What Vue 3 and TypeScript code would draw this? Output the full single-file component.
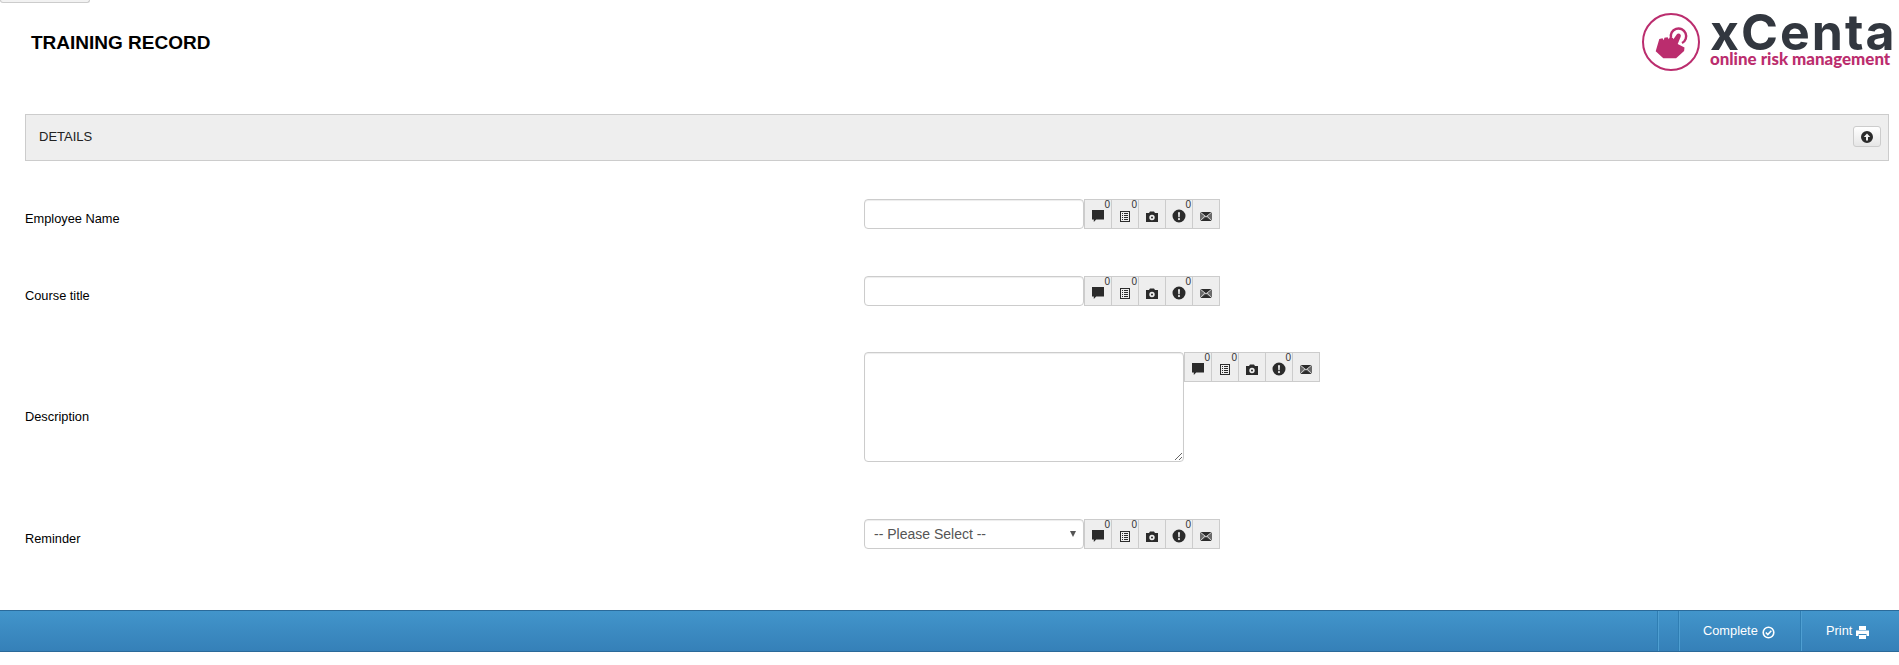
<script setup lang="ts">
type Tool = { name: string; count: boolean }
type Row = { label: string; kind: 'input' | 'area' | 'select' }
const tools: Tool[] = [
  { name: 'comment', count: true },
  { name: 'list', count: true },
  { name: 'camera', count: false },
  { name: 'alert', count: true },
  { name: 'mail', count: false },
]
const rows: Row[] = [
  { label: 'Employee Name', kind: 'input' },
  { label: 'Course title', kind: 'input' },
  { label: 'Description', kind: 'area' },
  { label: 'Reminder', kind: 'select' },
]
</script>

<template>
  <div class="page">
    <div class="stub"></div>
    <header class="head">
      <h1 class="title">TRAINING RECORD</h1>
      <div class="logo">
        <svg class="mark" width="60" height="60" viewBox="0 0 60 60">
          <circle cx="30" cy="30" r="28" fill="none" stroke="#bb2d6e" stroke-width="2" />
          <path d="M14.700 39.300L18.300 27l3.200-.8 1.300 2 .6-2.400 3.200-.6 1.200 2 .8-1.700 3.400.4.400 1.400 3.300-4.800a2.300 2.300 0 0 1 4 2.200l-3 7.300 6.800 3.500-.4 3.600-8 7.200H22.300z" fill="#bb2d6e" />
          <path d="M30 26A7.700 7.700 0 1 1 41 31" fill="none" stroke="#bb2d6e" stroke-width="2.400" />
        </svg>
        <div class="brand">
          <div class="word">xCenta</div>
          <div class="tag">online risk management</div>
        </div>
      </div>
    </header>

    <section class="panel">
      <span class="panel-title">DETAILS</span>
      <button class="collapse" type="button" aria-label="Collapse">
        <svg width="12" height="12" viewBox="0 0 12 12">
          <path fill-rule="evenodd" d="M6 0a6 6 0 1 1 0 12A6 6 0 0 1 6 0zM6 2.500L2.800 6H5v3.500h2V6h2.200z" fill="#2b2b2b" />
        </svg>
      </button>
    </section>

    <form class="form" @submit.prevent>
      <div v-for="r in rows" :key="r.label" class="row" :class="'row-' + r.kind">
        <label class="lbl">{{ r.label }}</label>
        <div class="ctl">
          <input v-if="r.kind === 'input'" class="field" type="text" />
          <textarea v-else-if="r.kind === 'area'" class="field area"></textarea>
          <div v-else class="select-wrap">
            <select class="field sel">
              <option>-- Please Select --</option>
            </select>
          </div>
          <div class="tools">
            <span v-for="t in tools" :key="t.name" class="tool">
              <i v-if="t.count" class="num">0</i>
              <svg width="14" height="14" viewBox="0 0 14 14">
                <path v-if="t.name === 'comment'" d="M1 1h12v9.500H5.200L2.800 13v-2.500H1z" />
                <path v-else-if="t.name === 'list'" fill-rule="evenodd" d="M2 2h10v11H2zM3 3v9h8V3zM4 4h1v1H4zM6 4h4v1H6zM4 6h1v1H4zM6 6h4v1H6zM4 8h1v1H4zM6 8h4v1H6zM4 10h1v1H4zM6 10h4v1H6z" />
                <path v-else-if="t.name === 'camera'" fill-rule="evenodd" d="M1 4h3l1-1.500h4L10 4h3v9H1zM7 5.800a2.700 2.700 0 1 0 0 5.400 2.700 2.700 0 0 0 0-5.400zM7 7.500a1 1 0 1 1 0 2 1 1 0 0 1 0-2z" />
                <path v-else-if="t.name === 'alert'" fill-rule="evenodd" d="M7 .5a6.500 6.500 0 1 1 0 13A6.500 6.500 0 0 1 7 .5zM6 3.200l.3 5h1.400l.3-5zM7 9a1.100 1.100 0 1 0 0 2.200A1.100 1.100 0 0 0 7 9z" />
                <template v-else>
                  <path fill="#6a6a6a" d="M1 3h12v9H1z" />
                  <path d="M1.500 3h11L7 7.300zM1.500 12L7 8.300l5.500 3.700z" />
                  <path fill="none" stroke="#e4e4e4" stroke-width=".8" d="M1 3l6 4.800L13 3M1 12l4.800-5M13 12L8.200 7" />
                </template>
              </svg>
            </span>
          </div>
        </div>
      </div>
    </form>

    <footer class="bar">
      <div class="sep-a"></div>
      <div class="bar-item bar-complete">
        <span>Complete</span>
        <svg width="13" height="13" viewBox="0 0 13 13">
          <circle cx="6.500" cy="6.500" r="5.300" fill="none" stroke="#fff" stroke-width="1.600" />
          <path d="M3.800 6.500l2 2 3.500-3.700" fill="none" stroke="#fff" stroke-width="1.600" />
        </svg>
      </div>
      <div class="bar-item bar-print">
        <span>Print</span>
        <svg width="13" height="13" viewBox="0 0 13 13">
          <path fill-rule="evenodd" fill="#fff" d="M3 0h7v4H3zM0 4.500h13V10h-2.500V8h-8v2H0zM3 9h7v4H3z" />
        </svg>
      </div>
    </footer>
  </div>
</template>

<style>
html, body { margin: 0; background: #fff; }
</style>

<style scoped>
.page {
  width: 1899px;
  height: 665px;
  overflow: hidden;
  font-family: "Liberation Sans", Arial, sans-serif;
  font-size: 12.800px;
  color: #222;
}
.stub {
  width: 88px;
  height: 2px;
  border: 1px solid #ccc;
  border-top: 0;
  border-radius: 0 0 4px 4px;
  background: #f2f2f2;
}
.head {
  display: flex;
  justify-content: space-between;
  align-items: flex-start;
  height: 111px;
  padding-left: 31px;
}
.title {
  margin: 29px 0 0;
  font-size: 19px;
  line-height: 22px;
  font-weight: 700;
  color: #000;
}
.logo {
  display: flex;
  gap: 9px;
  width: 258px;
  margin-top: 9px;
  flex: none;
}
.mark { flex: none; }
.brand { flex: none; }
.word {
  font-family: Inter, sans-serif;
  font-weight: 700;
  font-size: 50px;
  line-height: 40px;
  color: #32373f;
  letter-spacing: 2px;
}
.tag {
  font-family: Lato, sans-serif;
  font-weight: 900;
  font-size: 16.900px;
  line-height: 14px;
  color: #bb2d6e;
  white-space: nowrap;
}
.panel {
  display: flex;
  align-items: center;
  justify-content: space-between;
  box-sizing: border-box;
  width: 1864px;
  height: 47px;
  margin-left: 25px;
  padding: 0 7px 2px 13px;
  border: 1px solid #ccc;
  background: #eee;
}
.panel-title { color: #222; font-size: 13px; }
.collapse {
  display: flex;
  align-items: center;
  justify-content: center;
  box-sizing: border-box;
  width: 28px;
  height: 21px;
  padding: 0;
  border: 1px solid #ccc;
  border-radius: 3px;
  background: linear-gradient(#fff, #e6e6e6);
}
.form {
  display: flex;
  flex-direction: column;
  gap: 38px;
  margin-top: 38px;
  padding-left: 25px;
}
.row {
  display: grid;
  grid-template-columns: 839px 1fr;
  align-items: center;
  padding-bottom: 8px;
}
.row:first-child { padding-bottom: 9px; }
.row-area { padding-bottom: 18px; }
.row-select { padding-top: 1px; }
.lbl { color: #000; padding-top: 8px; }
.row-area .lbl { padding-top: 18px; }
.row-select .lbl { padding-top: 8px; }
.ctl { display: flex; align-items: flex-start; }
.field {
  display: block;
  box-sizing: border-box;
  width: 220px;
  height: 30px;
  margin: 0;
  border: 1px solid #ccc;
  border-radius: 4px;
  outline: 0;
  background: #fff;
  box-shadow: inset 0 1px 1px rgba(0, 0, 0, .075);
  font: 14px "Liberation Sans", Arial, sans-serif;
  color: #555;
}
.area { width: 320px; height: 110px; }
.select-wrap { position: relative; }
.select-wrap::after {
  content: "";
  position: absolute;
  top: 12px;
  right: 8px;
  border-left: 3.500px solid transparent;
  border-right: 3.500px solid transparent;
  border-top: 6px solid #555;
}
.sel { appearance: none; padding: 0 20px 0 9px; }
.tools { display: flex; }
.tool {
  position: relative;
  display: flex;
  align-items: flex-end;
  justify-content: center;
  box-sizing: border-box;
  width: 27px;
  height: 30px;
  padding-bottom: 5px;
  border: 1px solid #ccc;
  border-left: 0;
  background: #eee;
}
.tool:first-child { border-left: 1px solid #ccc; width: 28px; }
.tool svg { fill: #2b2b2b; display: block; }
.num {
  position: absolute;
  top: -1px;
  right: 1px;
  font-style: normal;
  font-size: 10px;
  line-height: 11px;
  color: #333;
}
.bar {
  display: flex;
  justify-content: flex-end;
  box-sizing: border-box;
  height: 42px;
  margin-top: 53px;
  border-top: 1px solid #2a6a9a;
  border-bottom: 1px solid #2a6a9a;
  background: linear-gradient(#4295cb, #3580b8);
  color: #fff;
}
.sep-a {
  width: 20px;
  border-left: 1px solid #2f7eb3;
  box-shadow: inset 1px 0 0 #4f9fd2;
}
.bar-item {
  display: flex;
  align-items: center;
  gap: 4px;
  box-sizing: border-box;
  height: 100%;
  padding-bottom: 2px;
  border-left: 1px solid #2f7eb3;
  box-shadow: inset 1px 0 0 #4f9fd2;
}
.bar-complete { width: 122px; padding-left: 24px; }
.bar-print { width: 99px; padding-left: 25px; }
.bar-item svg { margin-top: 5px; }
</style>
